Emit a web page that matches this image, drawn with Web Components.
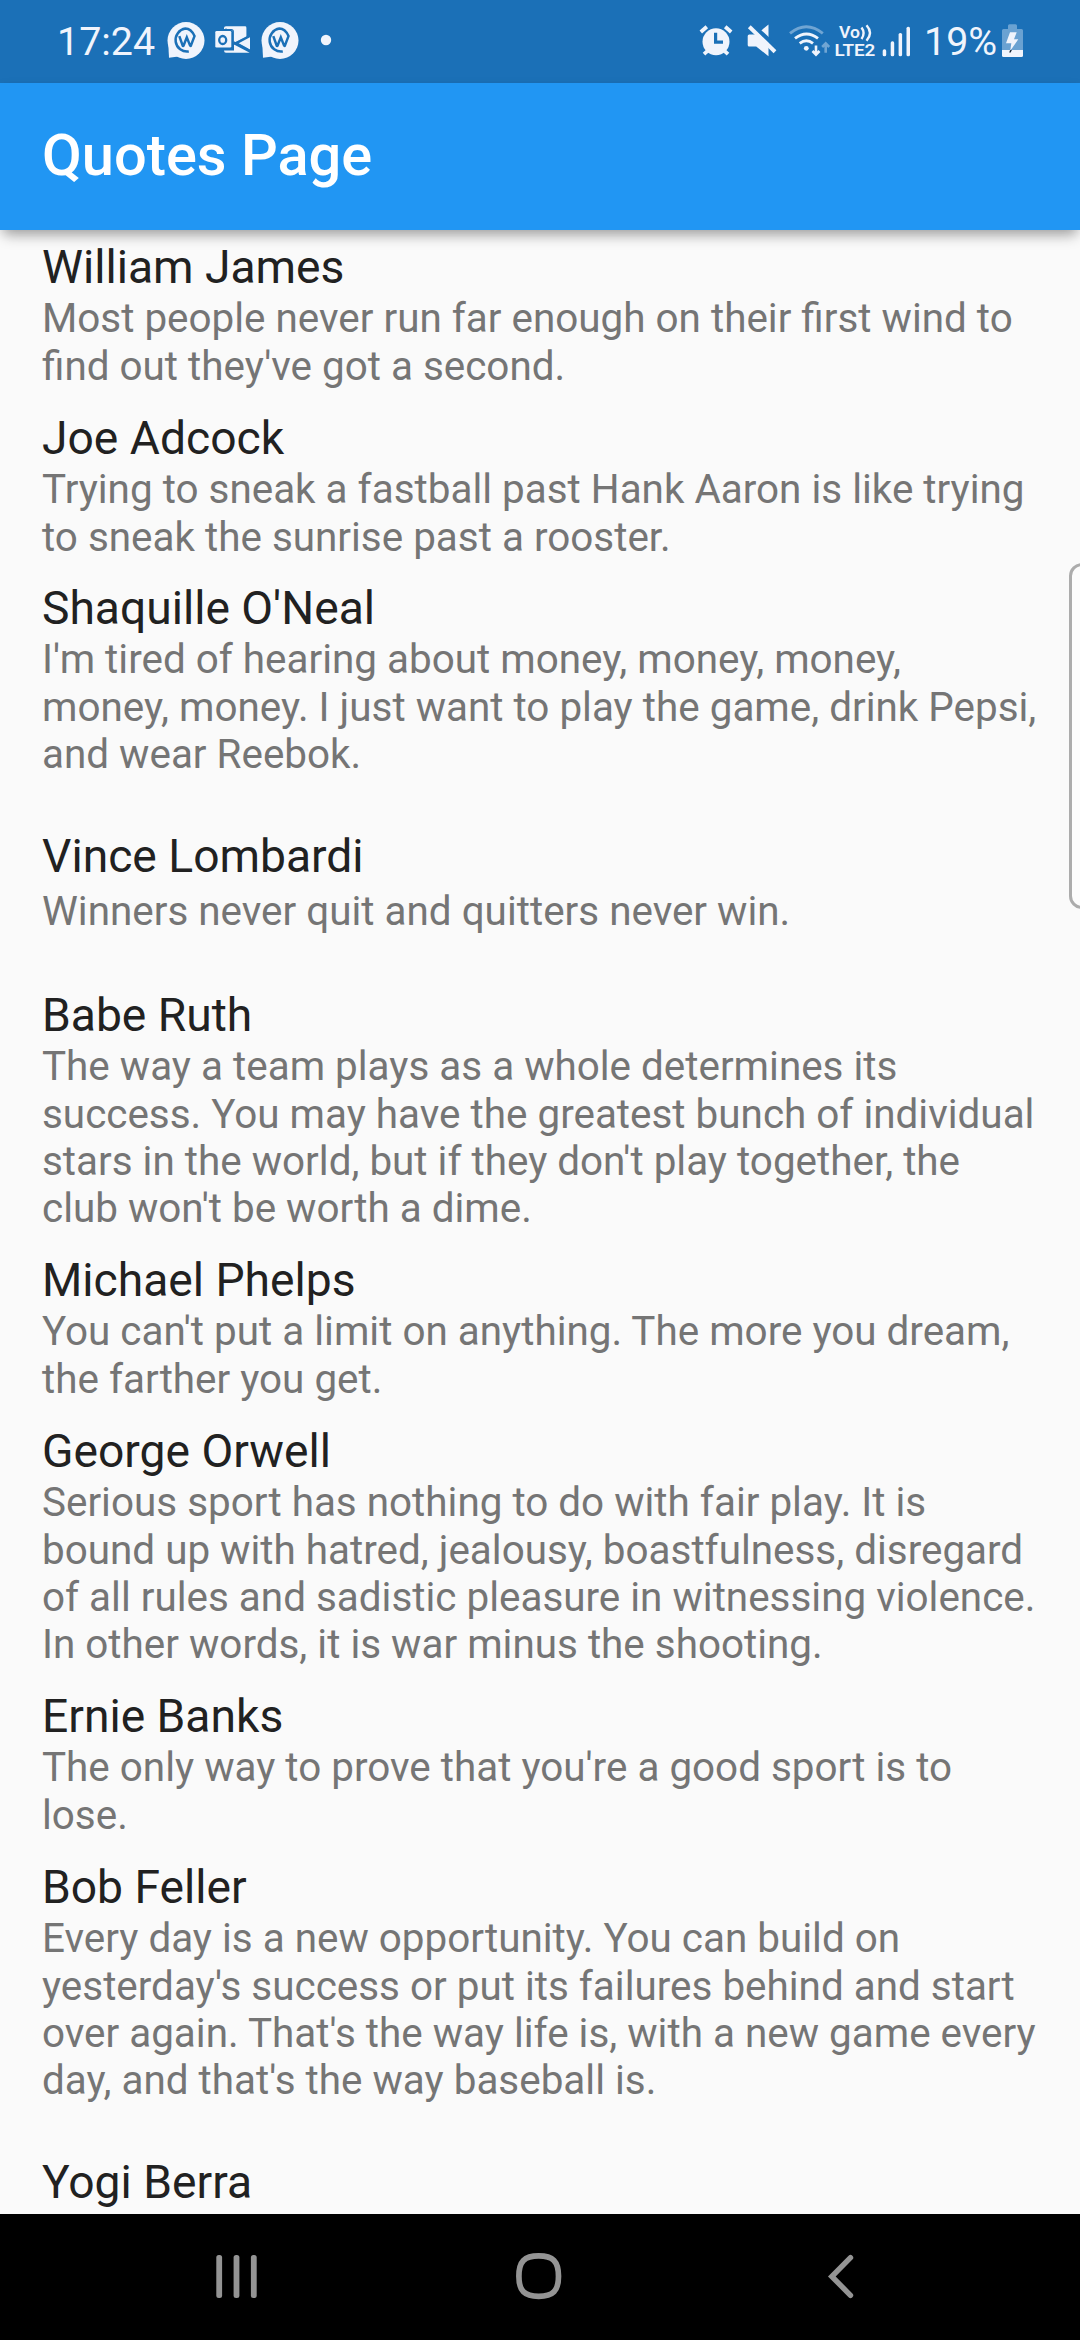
<!DOCTYPE html>
<html lang="en">
<head>
<meta charset="utf-8">
<title>Quotes Page</title>
<style>
html,body{margin:0;padding:0;background:#fafafa}
body{font-family:Roboto,sans-serif;width:1080px;height:2340px;overflow:hidden}
</style>
</head>
<body>
<quotes-app></quotes-app>
<script>
class BaseElement extends HTMLElement {
  constructor(){
    super();
    this.attachShadow({mode:'open'}).innerHTML = `<style>${this.constructor.css}</style>${this.constructor.html}`;
  }
}

const workplace = x => `<svg width="38" height="40" viewBox="166.500 20 38 40" style="margin-left:${x}px">
  <circle cx="185.500" cy="40.500" r="18.500" fill="#f0f4fc"/><path d="M167.800 44l.7 13.700 9.500-1.200z" fill="#f0f4fc"/>
  <path d="M178.800 36l3.300 9.300q.5 1.200 1 0l3.200-8.100 3.200 8.100q.5 1.200 1 0l3.500-9.300C191.500 30.500 188 28.500 184.900 28.500A11.500 11.500 0 1 0 188.300 51.300" transform="translate(0 .1)" fill="none" stroke="#1b70b7" stroke-width="2.500"/>
</svg>`;

customElements.define('status-bar', class extends BaseElement {
  static css = `
    :host{display:flex;align-items:flex-start;justify-content:space-between;box-sizing:border-box;height:83px;background:#1b70b7;color:#f0f4fc;padding:20px 55px 0 57px;font:400 39.400px/44px Roboto,sans-serif}
    .g{display:flex;align-items:flex-start;height:44px}
    svg{display:block;flex:none}
    .time{width:97px;white-space:nowrap}
    .pct{width:73px;white-space:nowrap;margin-left:13px}`;
  static html = `
  <div class="g"><span class="time">17:24</span>
    ${workplace(12.5)}
    <svg width="36" height="40" viewBox="215 20 36 40" style="margin-left:10.500px">
      <g fill="#f0f4fc"><path d="M226 26.300h19q1.400 0 1.400 1.400v9.300l-12.900 6.300H224V28q0-1.700 2-1.700z"/><path d="M250 37.300v12.200l-11.300-6.300z"/><path d="M234 44.500l15.700 8.200H226q-2 0-2-2.200h10z"/></g>
      <rect x="214.800" y="30" width="18.200" height="18.700" rx="2" fill="#1b70b7"/>
      <rect x="215.300" y="31" width="16" height="16.600" rx="1.300" fill="#f0f4fc"/>
      <path d="M226 31v-2.500M224 29.600h7.300q2 0 2 2v15.800q0 1.600-1.600 1.600H224" fill="none" stroke="#1b70b7" stroke-width="1.200"/>
      <ellipse cx="222.700" cy="40" rx="3.500" ry="4" fill="none" stroke="#1b70b7" stroke-width="2.300"/>
      <path d="M233.500 44l16-8.300M233.500 42l16 8.400" stroke="#1b70b7" stroke-width="1.700"/>
    </svg>
    ${workplace(9.500)}
    <svg width="12" height="40" viewBox="320 20 12 40" style="margin-left:21.500px"><circle cx="326" cy="40" r="5.200" fill="#f0f4fc"/></svg>
  </div>
  <div class="g">
    <svg width="36" height="40" viewBox="698 20 36 40">
      <circle cx="716" cy="41.800" r="13.500" fill="#f0f4fc"/>
      <path d="M700.800 32l6-5.200M731.200 32l-6-5.200M704 54.200l5-4.500M728 54.200l-5-4.500" stroke="#f0f4fc" stroke-width="3.800"/>
      <path d="M715.600 32.700v9.500h7.400" fill="none" stroke="#1b70b7" stroke-width="3.200"/>
    </svg>
    <svg width="32" height="40" viewBox="745 20 32 40" style="margin-left:11px">
      <path d="M749.200 34.500h7l12.300-10v31.700l-12.300-9.700h-7q-1.500 0-1.500-1.500v-9q0-1.500 1.500-1.500z" fill="#f0f4fc"/>
      <path d="M747 20l33 30.500" stroke="#1b70b7" stroke-width="4.500"/>
      <path d="M749.300 26.700l25.700 25" stroke="#f0f4fc" stroke-width="4"/>
    </svg>
    <svg width="44" height="40" viewBox="788 20 44 40" style="margin-left:11px">
      <g fill="none" stroke="#f0f4fc" stroke-width="2.900"><path d="M790 33.300Q806.300 20 822.800 33.300" opacity=".4"/><path d="M795 38.300Q806.500 29.500 818 38.300"/><path d="M799.700 43.400Q806.400 38.200 813 43.400"/></g>
      <circle cx="806.300" cy="48.300" r="2.400" fill="#f0f4fc"/>
      <path d="M816 45.500v9M812.500 51l3.500 3.600 3.500-3.600" fill="none" stroke="#f0f4fc" stroke-width="2.600"/>
      <path d="M825.700 52.700v-9M822.200 47l3.500-3.600 3.500 3.600" fill="none" stroke="#f0f4fc" stroke-width="2.600" opacity=".4"/>
    </svg>
    <svg width="44" height="40" viewBox="833 20 44 40" style="margin-left:1px" font-family="Roboto" font-weight="600" fill="#f0f4fc">
      <text x="839" y="37.700" font-size="16.500" textLength="21" lengthAdjust="spacingAndGlyphs">Vo</text>
      <path d="M861.500 27.500q4.200 5.500 0 11.500M866.500 25.200q7 7.600 0 15.600" fill="none" stroke="#f0f4fc" stroke-width="2.400"/>
      <text x="834.400" y="56" font-size="17.300" textLength="41" lengthAdjust="spacingAndGlyphs">LTE2</text>
    </svg>
    <svg width="30" height="40" viewBox="881 20 30 40" style="margin-left:4px" fill="#f0f4fc">
      <rect x="882.700" y="49.300" width="3.500" height="7" rx="1.600"/><rect x="890.700" y="41.300" width="3.500" height="15" rx="1.600"/><rect x="898.600" y="33" width="3.500" height="23.300" rx="1.600"/><rect x="906.500" y="26.700" width="3.500" height="29.600" rx="1.600"/>
    </svg>
    <span class="pct">19%</span>
    <svg width="24" height="40" viewBox="1001 20 24 40" style="margin-left:4px">
      <path d="M1008 29v-3.200q0-1.500 1.500-1.500h6q1.500 0 1.500 1.500V29h4.500q1.500 0 1.500 1.500V50h-21V30.500q0-1.500 1.500-1.500z" fill="#6aa2d2"/>
      <path d="M1002 50h21v5.500q0 1.500-1.500 1.500h-18q-1.500 0-1.500-1.500z" fill="#f0f4fc"/>
      <path d="M1010 32.300h6.700l-2.700 7h4.300l-8 11.500 1-7.500h-5.300z" fill="#f0f4fc"/><path d="M1010 50.300l2-.5-1.300 2.700h-1.500z" fill="#152434"/>
    </svg>
  </div>`;
});

customElements.define('app-bar', class extends BaseElement {
  static css = `
    :host{display:flex;align-items:center;height:147px;box-sizing:border-box;padding:0 42px 3px;background:#2196f3;color:#fff;position:relative;z-index:1;box-shadow:0 9px 13px -4px rgba(0,0,0,.32),0 3px 10px rgba(0,0,0,.08)}
    h1{margin:0;font:500 57.750px/68px Roboto,sans-serif;white-space:nowrap}`;
  static html = `<h1><slot></slot></h1>`;
});

customElements.define('quote-tile', class extends BaseElement {
  static css = `
    :host{display:flex;flex-direction:column;box-sizing:border-box;flex:none;padding:10px 0 0 42px;gap:0}
    :host([single]){padding-top:40px;gap:4px}
    .name{font-size:46.200px;line-height:54px;color:#212121;white-space:nowrap}
    .quote{font-size:40.425px;line-height:47.360px;color:#757575;white-space:nowrap;padding-top:1.300px}`;
  static html = `<div class="name"><slot name="author"></slot></div><div class="quote"><slot></slot></div>`;
});

customElements.define('nav-bar', class extends BaseElement {
  static css = `
    :host{display:flex;align-items:flex-start;height:126px;box-sizing:border-box;background:#000;padding:36px 226px 0 213px;position:relative;z-index:1}
    svg{display:block;flex:none}`;
  static html = `
    <svg width="48" height="54" viewBox="213 2250 48 54"><g fill="#949494"><rect x="216.300" y="2255" width="5.800" height="43" rx="2.500"/><rect x="233.600" y="2255" width="5.800" height="43" rx="2.500"/><rect x="250.900" y="2255" width="5.800" height="43" rx="2.500"/></g></svg>
    <svg width="54" height="54" viewBox="512 2250 54 54" style="margin-left:251px"><path d="M538.700 2255.900C553 2255.900 558.500 2261.500 558.500 2276.200S553 2296.400 538.700 2296.400S518.900 2291 518.900 2276.200S524.400 2255.900 538.700 2255.900z" fill="none" stroke="#949494" stroke-width="5.700"/></svg>
    <svg width="30" height="54" viewBox="824 2250 30 54" style="margin-left:258px"><path d="M850.500 2257.700L831.800 2276.500l18.700 18.800" fill="none" stroke="#949494" stroke-width="5.400" stroke-linecap="round"/></svg>`;
});

customElements.define('edge-handle', class extends BaseElement {
  static css = `:host{display:block;position:absolute;z-index:2;left:1069px;top:563px;width:30px;height:346px;box-sizing:border-box;border:3px solid #acacac;border-radius:13px;background:#fcfcfc}`;
  static html = ``;
});

customElements.define('quotes-app', class extends BaseElement {
  static css = `
    :host{display:flex;flex-direction:column;position:relative;width:1080px;height:2340px;overflow:hidden;background:#fafafa;font-family:Roboto,sans-serif}
    main{flex:1;min-height:0;overflow:hidden;display:flex;flex-direction:column}`;
  static html = `
  <status-bar></status-bar>
  <app-bar>Quotes Page</app-bar>
  <main>
    <quote-tile style="height:171px"><span slot="author">William James</span>Most people never run far enough on their first wind to<br>find out they've got a second.</quote-tile>
    <quote-tile style="height:170px"><span slot="author">Joe Adcock</span>Trying to sneak a fastball past Hank Aaron is like trying<br>to sneak the sunrise past a rooster.</quote-tile>
    <quote-tile style="height:218px"><span slot="author">Shaquille O'Neal</span>I'm tired of hearing about money, money, money,<br>money, money. I just want to play the game, drink Pepsi,<br>and wear Reebok.</quote-tile>
    <quote-tile single style="height:189px"><span slot="author">Vince Lombardi</span>Winners never quit and quitters never win.</quote-tile>
    <quote-tile style="height:265px"><span slot="author">Babe Ruth</span>The way a team plays as a whole determines its<br>success. You may have the greatest bunch of individual<br>stars in the world, but if they don't play together, the<br>club won't be worth a dime.</quote-tile>
    <quote-tile style="height:171px"><span slot="author">Michael Phelps</span>You can't put a limit on anything. The more you dream,<br>the farther you get.</quote-tile>
    <quote-tile style="height:265px"><span slot="author">George Orwell</span>Serious sport has nothing to do with fair play. It is<br>bound up with hatred, jealousy, boastfulness, disregard<br>of all rules and sadistic pleasure in witnessing violence.<br>In other words, it is war minus the shooting.</quote-tile>
    <quote-tile style="height:171px"><span slot="author">Ernie Banks</span>The only way to prove that you're a good sport is to<br>lose.</quote-tile>
    <quote-tile style="height:265px"><span slot="author">Bob Feller</span>Every day is a new opportunity. You can build on<br>yesterday's success or put its failures behind and start<br>over again. That's the way life is, with a new game every<br>day, and that's the way baseball is.</quote-tile>
    <quote-tile single style="height:99px"><span slot="author">Yogi Berra</span></quote-tile>
  </main>
  <nav-bar></nav-bar>
  <edge-handle></edge-handle>`;
});
</script>
</body>
</html>
